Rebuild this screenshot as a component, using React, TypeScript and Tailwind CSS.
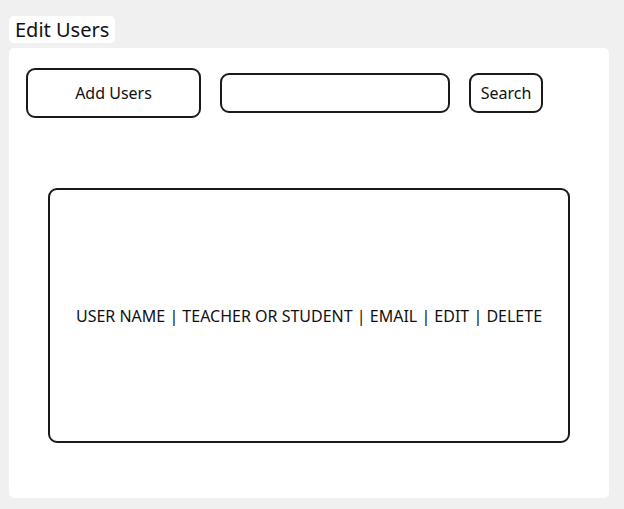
import React from "react";

export default function App() {
   return (
      <div className="min-h-[509px] w-full bg-[#f0f0f0] pt-4 pl-[9px] text-[#111]" style={{ fontFamily: '"Noto Sans", "Open Sans", sans-serif' }}>
         <div className="inline-block bg-white rounded-[5px] px-[6px] h-[27px] leading-[27px] text-[20px]">Edit Users</div>
         <div className="mt-[5px] w-[600px] h-[450px] bg-white rounded-[5px] pt-5 pl-[17px]">
            <div className="flex items-center gap-[19px]">
               <button className="w-[175px] h-[50px] border-2 border-[#1a1a1a] rounded-[9px] text-[16px]">Add Users</button>
               <input className="w-[230px] h-[40px] border-2 border-[#1a1a1a] rounded-[9px] outline-none px-2" />
               <button className="w-[74px] h-[40px] border-2 border-[#1a1a1a] rounded-[9px] text-[16px]">Search</button>
            </div>
            <div className="mt-[70px] ml-[22px] w-[522px] h-[255px] border-2 border-[#1a1a1a] rounded-[9px] flex items-center justify-center text-[16px]">
               USER NAME | TEACHER OR STUDENT | EMAIL | EDIT | DELETE
            </div>
         </div>
      </div>
   );
}
